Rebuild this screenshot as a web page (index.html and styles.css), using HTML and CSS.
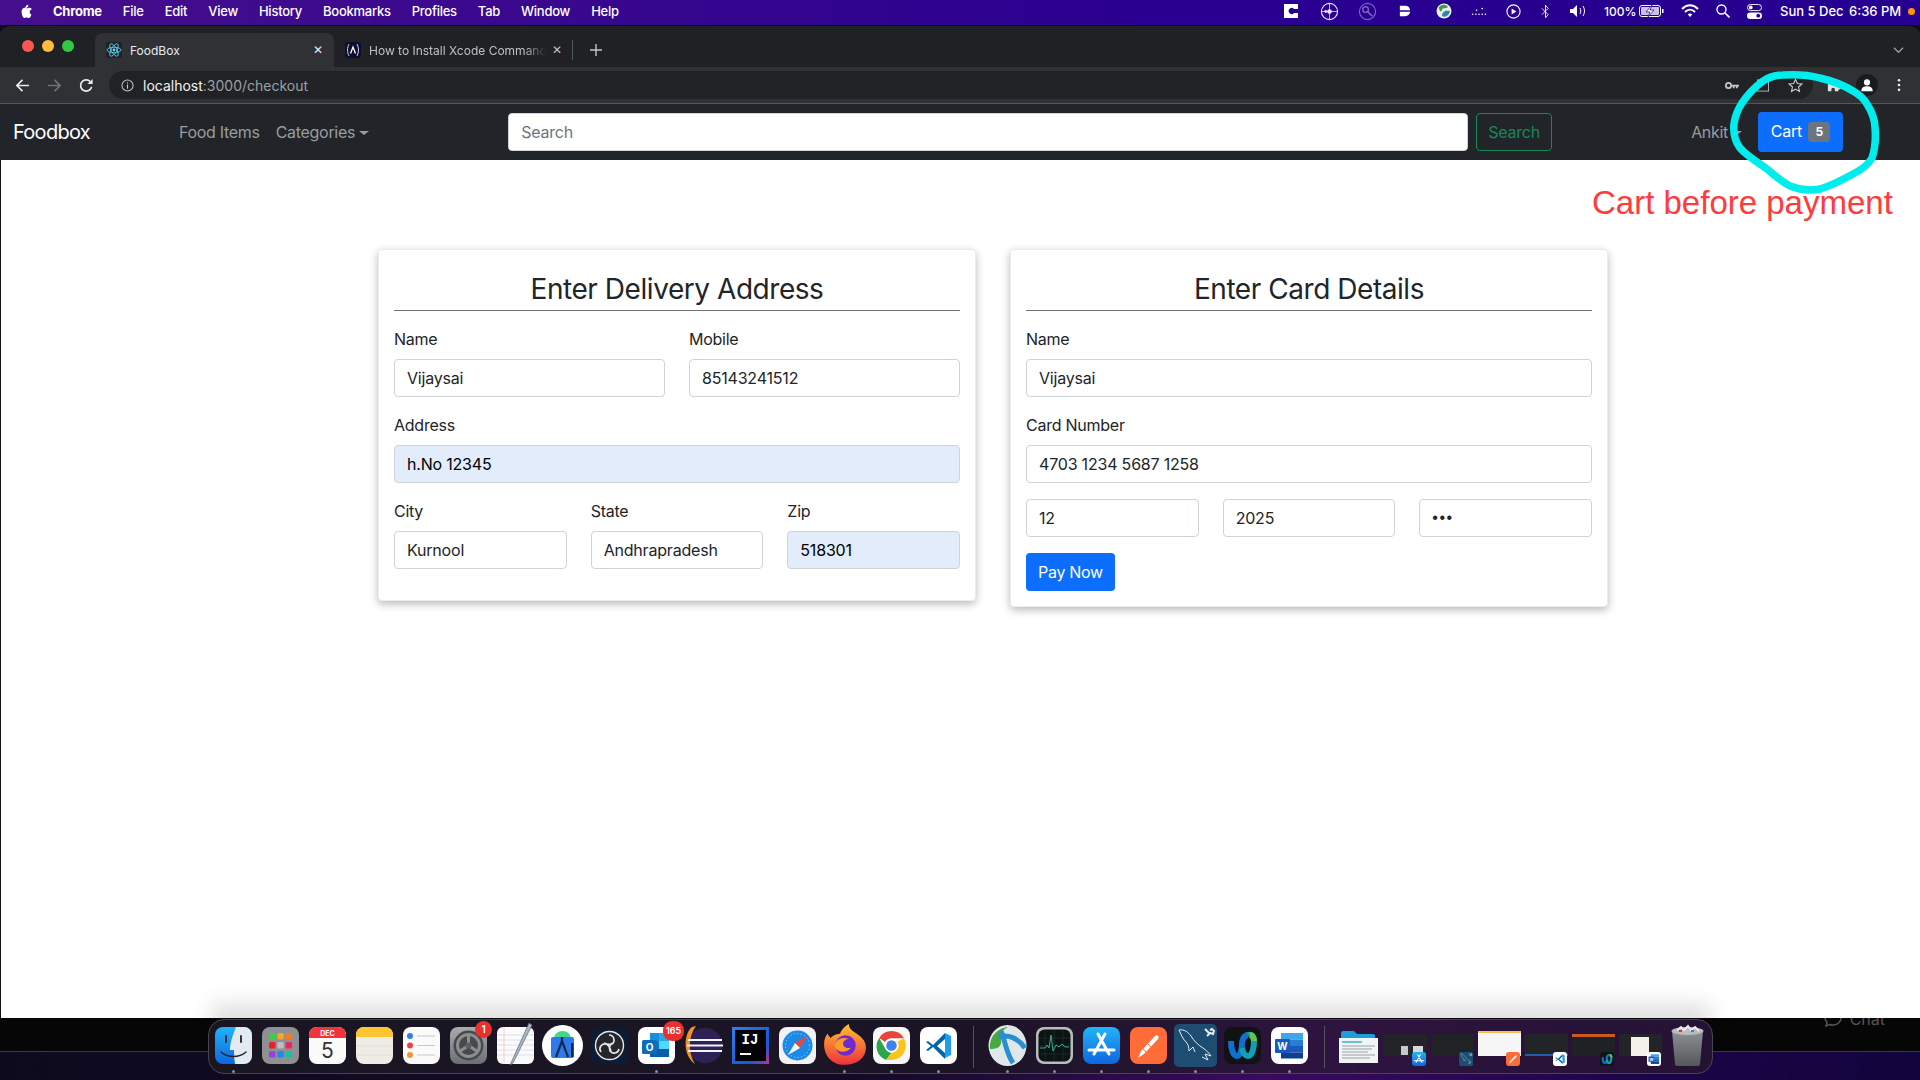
FILE: index.html
```html
<!DOCTYPE html>
<html lang="en">
<head>
<meta charset="UTF-8">
<meta name="viewport" content="width=device-width, initial-scale=1.0">
<title>FoodBox</title>
<link rel="stylesheet" href="styles.css">
</head>
<body>

<!-- shared icons for the dock -->
<svg class="defs" aria-hidden="true">
    <defs>
        <linearGradient id="g-blue" x1="0" y1="0" x2="0" y2="1"><stop offset="0" stop-color="#20b4f8"/><stop offset="1" stop-color="#0f66e0"/></linearGradient>
        <linearGradient id="g-gray" x1="0" y1="0" x2="0" y2="1"><stop offset="0" stop-color="#a9adb0"/><stop offset="1" stop-color="#6b6f72"/></linearGradient>
        <linearGradient id="g-ij" x1="0" y1="0" x2="1" y2="1"><stop offset="0" stop-color="#2f7fe8"/><stop offset=".7" stop-color="#1459d8"/><stop offset="1" stop-color="#c0308a"/></linearGradient>
        <linearGradient id="g-fox" x1="0" y1="0" x2="0" y2="1"><stop offset="0" stop-color="#ffc02e"/><stop offset="1" stop-color="#f0303f"/></linearGradient>
        <linearGradient id="g-trash" x1="0" y1="0" x2="0" y2="1"><stop offset="0" stop-color="#8d9193"/><stop offset="1" stop-color="#55585b"/></linearGradient>

        <symbol id="i-appstore" viewBox="0 0 37 37">
            <rect width="37" height="37" rx="8" fill="url(#g-blue)"/>
            <path d="M22 7 11 27M15 7l11 20M6 23h25" stroke="#fff" stroke-width="3" stroke-linecap="round" fill="none"/>
        </symbol>
        <symbol id="i-postman" viewBox="0 0 37 37">
            <rect width="37" height="37" rx="8" fill="#ff6c37"/>
            <path d="M8 31l3-7L25 9c2-2 5 1 3 3L14 27z" fill="#fff"/>
            <path d="M13 22l4 4M18 17l3 3" stroke="#ff6c37" stroke-width="1"/>
        </symbol>
        <symbol id="i-mysql" viewBox="0 0 43 43">
            <rect width="43" height="43" rx="5" fill="#1d4d70"/>
            <path d="M5 6c5-1 9 2 12 6 3 5 7 9 12 12 4 3 6 5 8 8l-6-2 3 6-6-3M5 6c2 4 3 8 7 12 2 2 3 5 3 9l4-4 2 5" stroke="#e4edf2" stroke-width="1" fill="none"/>
            <path d="M31 5l5 5M33 12l3-3 3 1 1-3-2-2-2 1" stroke="#e4edf2" stroke-width="2" fill="none"/>
        </symbol>
        <symbol id="i-webex" viewBox="0 0 37 37">
            <rect width="37" height="37" rx="8" fill="#111214"/>
            <path d="M7 14c0 8 2 15 6 15s5-8 5-12 2-9 6-9" stroke="#1170cf" stroke-width="6" fill="none"/>
            <path d="M18 21c1 5 3 8 6 8 4 0 6-7 6-15 0-4-3-7-6-6" stroke="#0fa0b8" stroke-width="6" fill="none"/>
            <path d="M26 8c3 0 4 3 4 6" stroke="#5fc94a" stroke-width="6" fill="none"/>
        </symbol>
        <symbol id="i-word" viewBox="0 0 37 37">
            <rect width="37" height="37" rx="8" fill="#fff"/>
            <rect x="10" y="6" width="22" height="6.500" fill="#41a5ee"/>
            <rect x="10" y="12.500" width="22" height="6.500" fill="#2b7cd3"/>
            <rect x="10" y="19" width="22" height="6.500" fill="#185abd"/>
            <rect x="10" y="25.500" width="22" height="6" fill="#103f91"/>
            <rect x="4" y="12" width="15" height="14" rx="1" fill="#185abd"/>
            <text x="11.500" y="23" text-anchor="middle" class="svg-text" font-size="10" font-weight="700" fill="#fff">W</text>
        </symbol>
        <symbol id="i-vscode" viewBox="0 0 37 37">
            <rect width="37" height="37" rx="8" fill="#fff"/>
            <path d="M25 6v25l6-3V9z" fill="#1f9cf0"/>
            <path d="M25 6 13 18 8 14l-2 1 5 4-5 4 2 1 5-4 12 12v-6l-8-7 8-7z" fill="#0065a9"/>
        </symbol>
    </defs>
</svg>

<div class="menubar">
    <svg class="apple" viewBox="0 0 20 20"><path d="M12.200 2.500c.1 1-.3 2-.9 2.700-.6.700-1.600 1.300-2.600 1.200-.1-1 .4-2 .9-2.600.6-.7 1.700-1.300 2.600-1.300zM15.500 8.100c-.1.100-1.700 1-1.700 3 0 2.300 2 3.100 2.100 3.100 0 .1-.3 1.100-1 2.200-.6.900-1.300 1.800-2.300 1.800s-1.300-.6-2.500-.6c-1.100 0-1.500.6-2.500.6s-1.600-.9-2.300-1.900C4.900 15 4.200 12.900 4.200 11c0-3 2-4.700 3.900-4.700 1 0 1.900.7 2.500.7.600 0 1.600-.7 2.700-.7.400 0 2 0 3 1.500z" fill="#fff"/></svg>
    <div class="menu-items">
        <span class="menu-app">Chrome</span>
        <span>File</span>
        <span>Edit</span>
        <span>View</span>
        <span>History</span>
        <span>Bookmarks</span>
        <span>Profiles</span>
        <span>Tab</span>
        <span>Window</span>
        <span>Help</span>
    </div>
    <div class="status">
        <svg class="st st-c" viewBox="0 0 14 14"><rect width="14" height="14" fill="#fff"/><path d="M10 5a3 3 0 1 0 0 4h4V5z" fill="#240088"/></svg>
        <svg class="st st-globe" viewBox="0 0 20 20"><circle cx="10" cy="10" r="8.500" fill="none" stroke="#e8e4f5" stroke-width="1.200"/><path d="M10 1.500v17M1.500 10h17" stroke="#e8e4f5" stroke-width=".8"/><circle cx="10" cy="10" r="2.500" fill="#e8e4f5"/><circle cx="6" cy="10" r="1.500" fill="#e8e4f5"/></svg>
        <svg class="st st-key" viewBox="0 0 20 20"><circle cx="10" cy="10" r="8.500" fill="none" stroke="#7a66c0" stroke-width="1.200"/><circle cx="8" cy="8" r="3" fill="none" stroke="#7a66c0" stroke-width="1.500"/><path d="M10 10l5 5" stroke="#7a66c0" stroke-width="1.800"/></svg>
        <svg class="st st-d" viewBox="0 0 14 14"><path d="M1 1h6a6 6 0 0 1 6 5H1zM1 8h12a6 6 0 0 1-6 5H1z" fill="#fff"/></svg>
        <svg class="st st-earth" viewBox="0 0 16 16"><circle cx="8" cy="8" r="7.500" fill="#e8efe8"/><path d="M3 4c3-3 7-3 9 0-2 2-5 0-6 3S3 8 3 4z" fill="#3f9a50"/><path d="M6 13c0-4 3-6 8-5-1 4-4 7-8 5z" fill="#2b86b8"/></svg>
        <svg class="st st-dots" viewBox="0 0 20 12"><g fill="#fff"><circle cx="2" cy="10" r="1"/><circle cx="6" cy="10" r="1"/><circle cx="10" cy="10" r="1"/><circle cx="14" cy="10" r="1"/><circle cx="18" cy="10" r="1"/><circle cx="7" cy="5" r="1"/><circle cx="14" cy="3" r="1"/></g></svg>
        <svg class="st st-play" viewBox="0 0 16 16"><circle cx="8" cy="8" r="7" fill="none" stroke="#fff" stroke-width="1.200"/><path d="M6 4.800v6.400L11 8z" fill="#fff"/></svg>
        <svg class="st st-bt" viewBox="0 0 10 16"><path d="M1 4.500l7 7L5 15V1l3 3.500-7 7" fill="none" stroke="#e8e4f5" stroke-width="1.100"/></svg>
        <svg class="st st-vol" viewBox="0 0 18 14"><path d="M0 5h3l4-4v12L3 9H0z" fill="#fff"/><path d="M10 4c1 2 1 4 0 6M13 2c2 3 2 7 0 10" stroke="#fff" fill="none"/></svg>
        <span class="st-pct">100%</span>
        <svg class="st st-bat" viewBox="0 0 25 12"><rect x=".5" y=".5" width="21" height="11" rx="2.500" fill="none" stroke="#fff"/><rect x="2" y="2" width="18" height="8" rx="1" fill="#c9c4e6"/><path d="M13 0l-6 7h4l-2 5 6-7h-4z" fill="#fff" stroke="#240088" stroke-width=".7"/><rect x="23" y="4" width="1.500" height="4" fill="#fff"/></svg>
        <svg class="st st-wifi" viewBox="0 0 18 14"><path d="M1 5c5-5 11-5 16 0M4 8c3-3 7-3 10 0" fill="none" stroke="#fff" stroke-width="2"/><path d="M6.800 10.500c1.400-1.200 3-1.200 4.400 0L9 13z" fill="#fff"/></svg>
        <svg class="st st-search" viewBox="0 0 14 14"><circle cx="5.500" cy="5.500" r="4.500" fill="none" stroke="#fff" stroke-width="1.400"/><path d="M9 9l4.500 4.500" stroke="#fff" stroke-width="1.600"/></svg>
        <svg class="st st-ctl" viewBox="0 0 16 16"><rect x=".5" y=".5" width="15" height="6.500" rx="3.200" fill="none" stroke="#fff"/><circle cx="4" cy="3.700" r="2" fill="#fff"/><rect x="0" y="9" width="16" height="7" rx="3.500" fill="#fff"/><circle cx="12" cy="12.500" r="2" fill="#240088"/></svg>
        <span class="st-date">Sun 5 Dec</span>
        <span class="st-time">6:36 PM</span>
        <span class="st-rec"></span>
    </div>
</div>

<div class="window">
    <div class="tabstrip">
        <div class="lights">
            <span class="light red"></span>
            <span class="light yellow"></span>
            <span class="light green"></span>
        </div>
        <div class="tab tab-active">
            <svg class="favicon" viewBox="0 0 16 16"><rect width="16" height="16" rx="2" fill="#20232a"/><g fill="none" stroke="#61dafb" stroke-width=".8"><ellipse cx="8" cy="8" rx="7" ry="2.800"/><ellipse cx="8" cy="8" rx="7" ry="2.800" transform="rotate(60 8 8)"/><ellipse cx="8" cy="8" rx="7" ry="2.800" transform="rotate(120 8 8)"/></g><circle cx="8" cy="8" r="1.400" fill="#61dafb"/></svg>
            <span class="tab-title">FoodBox</span>
            <span class="tab-close">✕</span>
        </div>
        <div class="tab tab-other">
            <svg class="favicon" viewBox="0 0 16 16"><rect width="16" height="16" rx="2" fill="#0b1030"/><path d="M4 2C2 6 2 10 4 14M12 2c2 4 2 8 0 12" fill="none" stroke="#ccd" stroke-width="1"/><path d="M5.500 11.500 8 5l2.500 6.500" fill="none" stroke="#fff" stroke-width="1.300"/></svg>
            <span class="tab-title tab-fade">How to Install Xcode Command</span>
            <span class="tab-close dim">✕</span>
        </div>
        <span class="tab-sep"></span>
        <svg class="new-tab" viewBox="0 0 12 12"><path d="M6 0v12M0 6h12" stroke="#c4c7c9" stroke-width="1.400"/></svg>
        <svg class="tab-menu" viewBox="0 0 12 8"><path d="M1 1.500l5 5 5-5" fill="none" stroke="#9a9da0" stroke-width="1.400"/></svg>
    </div>

    <div class="toolbar">
        <svg class="tool tool-back" viewBox="0 0 16 16"><path d="M15 8H2M8 2 2 8l6 6" fill="none" stroke="#e8eaed" stroke-width="1.800"/></svg>
        <svg class="tool tool-fwd" viewBox="0 0 16 16"><path d="M1 8h13M8 2l6 6-6 6" fill="none" stroke="#6f7275" stroke-width="1.800"/></svg>
        <svg class="tool tool-reload" viewBox="0 0 16 16"><path d="M13.500 9.500A6 6 0 1 1 12 3.800" fill="none" stroke="#e8eaed" stroke-width="1.800"/><path d="M14.500 1v5.500H9z" fill="#e8eaed"/></svg>
        <div class="omnibox">
            <svg class="omni-info" viewBox="0 0 14 14"><circle cx="7" cy="7" r="6" fill="none" stroke="#c4c7c9" stroke-width="1.100"/><path d="M7 6v4.500M7 3.500v1.300" stroke="#c4c7c9" stroke-width="1.200"/></svg>
            <span class="url"><span class="url-host">localhost</span>:3000/checkout</span>
            <svg class="omni-key" viewBox="0 0 16 10"><circle cx="4" cy="5" r="3" fill="none" stroke="#c4c7c9" stroke-width="2"/><path d="M7 4h9v2h-1.500v2h-2V6H11v2H9V6H7z" fill="#c4c7c9"/></svg>
            <svg class="omni-tabicon" viewBox="0 0 14 14"><rect x=".5" y=".5" width="13" height="13" fill="none" stroke="#c4c7c9"/></svg>
            <svg class="omni-star" viewBox="0 0 16 16"><path d="M8 1.500l2 4.400 4.800.5-3.600 3.200 1 4.700L8 11.900l-4.200 2.400 1-4.700L1.200 6.400 6 5.900z" fill="none" stroke="#c4c7c9" stroke-width="1.200"/></svg>
        </div>
        <svg class="tool-ext" viewBox="0 0 16 16"><path d="M1 15V6h4V4a2 2 0 0 1 4 0v2h4v3h1a2 2 0 0 1 0 4h-1v2h-4v-2a2 2 0 0 0-4 0v2z" fill="#dfe1e3"/></svg>
        <div class="avatar"><svg viewBox="0 0 16 16"><circle cx="8" cy="5" r="3.500" fill="#fff"/><path d="M1.500 15c0-4 3-5.500 6.500-5.500s6.500 1.500 6.500 5.500z" fill="#fff"/></svg></div>
        <svg class="tool-dots" viewBox="0 0 4 16"><g fill="#e8eaed"><circle cx="2" cy="2.500" r="1.500"/><circle cx="2" cy="8" r="1.500"/><circle cx="2" cy="13.500" r="1.500"/></g></svg>
    </div>

    <nav class="navbar">
        <a class="brand">Foodbox</a>
        <a class="nav-link">Food Items</a>
        <a class="nav-link caret">Categories</a>
        <form class="search-form">
            <input class="search-input" type="text" placeholder="Search">
            <button class="search-btn" type="button">Search</button>
        </form>
        <a class="nav-link caret user">Ankit</a>
        <button class="cart-btn" type="button">Cart <span class="cart-badge">5</span></button>
    </nav>

    <main class="page">
        <div class="card">
            <h2 class="card-title">Enter Delivery Address</h2>
            <div class="row">
                <div class="field"><label>Name</label><input type="text" value="Vijaysai"></div>
                <div class="field"><label>Mobile</label><input type="text" value="85143241512"></div>
            </div>
            <div class="row">
                <div class="field"><label>Address</label><input class="autofill" type="text" value="h.No 12345"></div>
            </div>
            <div class="row">
                <div class="field"><label>City</label><input type="text" value="Kurnool"></div>
                <div class="field"><label>State</label><input type="text" value="Andhrapradesh"></div>
                <div class="field"><label>Zip</label><input class="autofill" type="text" value="518301"></div>
            </div>
        </div>

        <div class="card">
            <h2 class="card-title">Enter Card Details</h2>
            <div class="row">
                <div class="field"><label>Name</label><input type="text" value="Vijaysai"></div>
            </div>
            <div class="row">
                <div class="field"><label>Card Number</label><input type="text" value="4703 1234 5687 1258"></div>
            </div>
            <div class="row">
                <div class="field"><input type="text" value="12"></div>
                <div class="field"><input type="text" value="2025"></div>
                <div class="field"><input type="password" value="123"></div>
            </div>
            <button class="pay-btn" type="button">Pay Now</button>
        </div>

        <div class="dock-shade"></div>
    </main>
</div>

<!-- hand drawn annotation on top of the screenshot -->
<svg class="scribble" viewBox="0 0 160 130"><path d="M58 9C72 8 84 9 95 12C108 15 120 20 128 25C135 29 139 33 142 38C147 46 150 54 150 62C151 73 150 83 147 92C143 99 136 104 128 108C117 114 106 120 95 123C85 125 75 124 65 120C57 116 49 109 42 103C32 96 22 90 15 82C10 75 8 67 9 58C10 50 13 43 17 37C23 28 30 21 38 15C44 11 51 9 58 9Z" fill="none" stroke="#00eded" stroke-width="7.500"/></svg>
<div class="note">Cart before payment</div>

<div class="desktop">
    <div class="behind-chat">
        <svg viewBox="0 0 18 18"><path d="M9 1c4.500 0 8 3 8 7s-3.500 7-8 7c-1 0-2 0-3-.5L2 16l1-3.500C2 11 1 10 1 8c0-4 3.500-7 8-7z" fill="none" stroke="#555" stroke-width="1.500"/></svg>
        <span>Chat</span>
    </div>
    <div class="dock">
        <div class="dock-item on">
            <svg class="ico" viewBox="0 0 37 37"><rect width="37" height="37" rx="8" fill="url(#g-blue)"/><path d="M29 0a8 8 0 0 1 8 8v21a8 8 0 0 1-8 8H20c-1-6-1-10-1-14h-4c0-8 3-15 6-23z" fill="#e3ebf2"/><path d="M11 9v6M26 9v6" stroke="#222" stroke-width="1.800" stroke-linecap="round"/><path d="M6 25c7 6 18 6 25 0" fill="none" stroke="#222" stroke-width="1.500" stroke-linecap="round"/></svg>
        </div>
        <div class="dock-item">
            <svg class="ico" viewBox="0 0 37 37"><rect width="37" height="37" rx="8" fill="#8f9094"/><g><rect x="7" y="6" width="6.500" height="6.500" rx="1.500" fill="#37d24a"/><rect x="15.300" y="6" width="6.500" height="6.500" rx="1.500" fill="#f5a623"/><rect x="23.600" y="6" width="6.500" height="6.500" rx="1.500" fill="#f57c1f"/><rect x="7" y="15" width="6.500" height="6.500" rx="1.500" fill="#e8202a"/><rect x="15.300" y="15" width="6.500" height="6.500" rx="1.500" fill="#b9c0c4"/><rect x="23.600" y="15" width="6.500" height="6.500" rx="1.500" fill="#f0285a"/><rect x="7" y="24" width="6.500" height="6.500" rx="1.500" fill="#9a3fe0"/><rect x="15.300" y="24" width="6.500" height="6.500" rx="1.500" fill="#1a8cf0"/><rect x="23.600" y="24" width="6.500" height="6.500" rx="1.500" fill="#14c49a"/></g></svg>
        </div>
        <div class="dock-item">
            <svg class="ico" viewBox="0 0 37 37"><rect width="37" height="37" rx="8" fill="#fbfbfb"/><path d="M0 11V8a8 8 0 0 1 8-8h21a8 8 0 0 1 8 8v3z" fill="#f0353a"/><text x="18.500" y="8.500" text-anchor="middle" class="svg-text" font-size="7" font-weight="700" fill="#fff">DEC</text><text x="18.500" y="31" text-anchor="middle" class="svg-text" font-size="21" fill="#333">5</text></svg>
        </div>
        <div class="dock-item">
            <svg class="ico" viewBox="0 0 37 37"><rect width="37" height="37" rx="8" fill="#efece6"/><path d="M0 10V8a8 8 0 0 1 8-8h21a8 8 0 0 1 8 8v2z" fill="#fdc530"/><path d="M0 19h37M0 28h37" stroke="#dcd9d2" stroke-width=".7"/></svg>
        </div>
        <div class="dock-item">
            <svg class="ico" viewBox="0 0 37 37"><rect width="37" height="37" rx="8" fill="#fafafa"/><circle cx="7" cy="9" r="3" fill="#2f7cf0"/><circle cx="7" cy="18.500" r="3" fill="#ee3f48"/><circle cx="7" cy="28" r="3" fill="#f59331"/><path d="M14 9h18M14 18.500h18M14 28h18" stroke="#c8c8c8"/></svg>
        </div>
        <div class="dock-item">
            <svg class="ico" viewBox="0 0 37 37"><rect width="37" height="37" rx="8" fill="url(#g-gray)"/><circle cx="18.500" cy="18.500" r="15" fill="#48494b"/><circle cx="18.500" cy="18.500" r="11" fill="none" stroke="#8c8f91" stroke-width="3"/><path d="M18.500 18.500V8M18.500 18.500l9 6M18.500 18.500l-9 6" stroke="#8c8f91" stroke-width="3"/><circle cx="18.500" cy="18.500" r="3" fill="#5b5e60"/></svg>
            <span class="dock-badge badge-one">1</span>
        </div>
        <div class="dock-item">
            <svg class="ico" viewBox="0 0 37 37"><rect width="37" height="37" rx="6" fill="#fbfbfb"/><path d="M0 8h37M0 13h37M0 18h37M0 23h37M0 28h37" stroke="#c6cfe0" stroke-width=".6"/><path d="M7 0v37" stroke="#f0b5b5" stroke-width=".6"/><path d="M32 -4 14 36l-1 2 3-2L35 -2z" fill="#a9b8c4" stroke="#59636b" stroke-width=".7"/></svg>
        </div>
        <div class="dock-item">
            <svg class="ico ico-over" viewBox="0 0 41 41"><circle cx="20.500" cy="20.500" r="20.500" fill="#fff"/><path d="M12 14c0-5 4-8 8.500-8s8.500 3 8.500 8z" fill="#3ddc84"/><rect x="9" y="12" width="23" height="21" rx="2" fill="#2f79ea"/><path d="M14 32l6-16 6 16M20 12v4" stroke="#0b2d55" stroke-width="2.200" fill="none"/><rect x="29" y="18" width="2.500" height="14" fill="#0b2d55"/></svg>
        </div>
        <div class="dock-item">
            <svg class="ico" viewBox="0 0 37 37"><rect width="37" height="37" rx="8" fill="#0d1c35"/><circle cx="18.500" cy="18.500" r="14" fill="#23272c" stroke="#e8e8e8" stroke-width="1.400"/><path d="M18 8a5 5 0 0 1 3 9c-3 1-6 0-8-1M28 22a5 5 0 0 1-9 2c-1-3 0-6 2-8M10 25a5 5 0 0 1 5-8c3 1 4 4 5 7" fill="none" stroke="#e8e8e8" stroke-width="1.600"/></svg>
        </div>
        <div class="dock-item on">
            <svg class="ico" viewBox="0 0 37 37"><rect width="37" height="37" rx="8" fill="#fff"/><rect x="12" y="6" width="10" height="8" fill="#1490df"/><rect x="21" y="6" width="10" height="8" fill="#28a8ea"/><rect x="12" y="14" width="10" height="8" fill="#0078d4"/><rect x="21" y="14" width="10" height="8" fill="#50d9ff"/><rect x="12" y="22" width="19" height="8" fill="#0a5ea8"/><rect x="4" y="13" width="15" height="14" rx="1.500" fill="#0f6cbd"/><text x="11.500" y="24" text-anchor="middle" class="svg-text" font-size="10" font-weight="700" fill="#fff">O</text></svg>
            <span class="dock-badge badge-mail">165</span>
        </div>
        <div class="dock-item">
            <svg class="ico ico-over" viewBox="0 0 41 41"><circle cx="22" cy="20.500" r="18" fill="#2c2255" stroke="#1c1c22"/><path d="M9 2C1 8-1 30 12 39 5 28 5 12 13 1z" fill="#f0902a"/><path d="M5 15h34M4 20.500h36M5 26h34" stroke="#f2f2fa" stroke-width="2"/></svg>
        </div>
        <div class="dock-item">
            <svg class="ico" viewBox="0 0 37 37"><rect width="37" height="37" fill="url(#g-ij)"/><rect x="3" y="3" width="31" height="31" fill="#050308"/><text x="18" y="17" text-anchor="middle" class="svg-text-mono" font-size="14" font-weight="700" fill="#fff">IJ</text><rect x="8" y="26" width="11" height="2" fill="#fff"/></svg>
        </div>
        <div class="dock-item">
            <svg class="ico" viewBox="0 0 37 37"><rect width="37" height="37" rx="8" fill="#f2f2f2"/><circle cx="18.500" cy="18.500" r="15" fill="#1d8ae8"/><circle cx="18.500" cy="18.500" r="12" fill="none" stroke="#bfe0fb" stroke-dasharray="1 2.500"/><path d="M28 9 16 16l5 5z" fill="#f44336"/><path d="M9 28l7-12 5 5z" fill="#fff"/></svg>
        </div>
        <div class="dock-item on">
            <svg class="ico ico-fox" viewBox="0 0 41 41"><path d="M20 39C8 39 1 30 1 20c0-4 1-7 3-10l3 4c3-3 6-4 9-4 1-4 5-7 8-9 0 3 2 6 6 8 5 3 10 7 10 14 0 9-8 16-20 16z" fill="url(#g-fox)"/><circle cx="21" cy="21" r="9.500" fill="#6b2bd0"/><path d="M11 19c3-5 9-6 13-4-4 0-6 3-5 6 1 2 4 3 7 2-3 4-9 5-13 2-2-1-2-4-2-6z" fill="#ff9a2a"/></svg>
        </div>
        <div class="dock-item on">
            <svg class="ico" viewBox="0 0 37 37"><rect width="37" height="37" rx="8" fill="#f7f7f7"/><path d="M18.500 4A14.500 14.500 0 0 1 31 11.300H18.500a7.200 7.200 0 0 0-6.300 3.700L6.200 10.900A14.500 14.500 0 0 1 18.500 4z" fill="#e8463a"/><path d="M6.200 10.900 12.500 22a7.200 7.200 0 0 0 6 3.700L13 33A14.500 14.500 0 0 1 6.200 10.900z" fill="#2ea44f"/><path d="M31 11.300A14.500 14.500 0 0 1 18.500 33h-5.500l5.500-7.300a7.200 7.200 0 0 0 6-11z" fill="#f8c51c"/><circle cx="18.500" cy="18.500" r="6" fill="#3d82f0" stroke="#fff" stroke-width="1.500"/></svg>
        </div>
        <div class="dock-item on">
            <svg class="ico"><use href="#i-vscode"/></svg>
        </div>

        <span class="dock-sep"></span>

        <div class="dock-item on">
            <svg class="ico ico-over" viewBox="0 0 41 41"><ellipse cx="20.500" cy="20.500" rx="19" ry="20.500" fill="#dfe7ea"/><path d="M3 24C2 11 11 3 21 2c-6 3-8 7-7 12 1 8-3 10-11 10z" fill="#4aa844"/><path d="M12 12c9-3 19 1 26 11M14 6c4 9 5 22 12 32" stroke="#2a8fd0" stroke-width="5" fill="none"/></svg>
        </div>
        <div class="dock-item on">
            <svg class="ico" viewBox="0 0 37 37"><rect width="37" height="37" rx="8" fill="#b9bcbe"/><rect x="2.500" y="2.500" width="32" height="32" rx="6" fill="#0c1412"/><path d="M9 3v31M18 3v31M27 3v31M3 11h31M3 19h31M3 27h31" stroke="#1c3a32" stroke-width=".6"/><path d="M4 21h5l2-3 2 3 2-13 2 16 3-6 3 2 3-3 3 3 4 0" fill="none" stroke="#3cb99c" stroke-width=".9"/></svg>
        </div>
        <div class="dock-item on">
            <svg class="ico"><use href="#i-appstore"/></svg>
        </div>
        <div class="dock-item on">
            <svg class="ico"><use href="#i-postman"/></svg>
        </div>
        <div class="dock-item on">
            <svg class="ico ico-wide"><use href="#i-mysql"/></svg>
        </div>
        <div class="dock-item on">
            <svg class="ico"><use href="#i-webex"/></svg>
        </div>
        <div class="dock-item on">
            <svg class="ico"><use href="#i-word"/></svg>
        </div>

        <span class="dock-sep"></span>

        <div class="dock-item">
            <svg class="ico ico-over" viewBox="0 0 41 41"><path d="M3 8a2 2 0 0 1 2-2h11l3 3h16a2 2 0 0 1 2 2v10H3z" fill="#1a9fdb"/><rect x="1" y="13" width="39" height="25" fill="#f1f4f5"/><path d="M4 17h20" stroke="#3ab0c8" stroke-width="1.500"/><path d="M4 21h33M4 24h30M4 27h26M4 30h33M4 33h28" stroke="#9aa1a5"/></svg>
        </div>
        <div class="dock-item">
            <div class="thumb"><span class="thumb-cards"></span></div>
            <svg class="mini"><use href="#i-appstore"/></svg>
        </div>
        <div class="dock-item">
            <div class="thumb thumb-dim"></div>
            <svg class="mini"><use href="#i-mysql"/></svg>
        </div>
        <div class="dock-item">
            <div class="thumb thumb-light"></div>
            <svg class="mini"><use href="#i-postman"/></svg>
        </div>
        <div class="dock-item">
            <div class="thumb thumb-code"></div>
            <svg class="mini"><use href="#i-vscode"/></svg>
        </div>
        <div class="dock-item">
            <div class="thumb thumb-orange"></div>
            <svg class="mini"><use href="#i-webex"/></svg>
        </div>
        <div class="dock-item">
            <div class="thumb"><span class="thumb-doc"></span></div>
            <svg class="mini"><use href="#i-word"/></svg>
        </div>
        <div class="dock-item">
            <svg class="ico ico-over" viewBox="0 0 41 41"><path d="M5 6h31l-3 33a2 2 0 0 1-2 2H10a2 2 0 0 1-2-2z" fill="url(#g-trash)"/><ellipse cx="20.500" cy="6" rx="16" ry="4" fill="#b9bcbe"/><path d="M10 5l4-3 3 3 4-4 3 4 4-3 4 4" fill="none" stroke="#e9e9e9" stroke-width="2"/><path d="M12 6l3 0" stroke="#d33" stroke-width="2"/><path d="M24 6h3" stroke="#38b" stroke-width="2"/></svg>
        </div>
    </div>
</div>

</body>
</html>
```

FILE: styles.css
```css
* {
    box-sizing: border-box;
}

html, body {
    margin: 0;
    padding: 0;
    width: 1920px;
    height: 1080px;
    overflow: hidden;
}

body {
    font-family: Inter, "Liberation Sans", sans-serif;
    display: flex;
    flex-direction: column;
    position: relative;
    color: #212529;
    background-color: #120a22;
}

.defs {
    position: absolute;
    width: 0;
    height: 0;
}

.svg-text {
    font-family: Inter, sans-serif;
}

.svg-text-mono {
    font-family: "Liberation Mono", monospace;
}

/* mac menu bar */
.menubar {
    height: 25px;
    flex: none;
    display: flex;
    align-items: center;
    padding: 0 0 3px 18px;
    background-image: linear-gradient(to right, #450f8c, #2a0090 60%, #260090);
    color: #fff;
    font-size: 13px;
    font-weight: 500;
}

.apple {
    width: 17px;
    height: 18px;
    margin-right: 18px;
}

.menu-items {
    display: flex;
    gap: 21px;
    letter-spacing: -0.25px;
}

.menu-app {
    font-weight: 700;
}

.status {
    margin-left: auto;
    display: flex;
    align-items: center;
    height: 22px;
}

.st {
    display: block;
}

.st-c { width: 14px; height: 14px; margin-right: 22px; }
.st-globe { width: 19px; height: 19px; margin-right: 19px; }
.st-key { width: 19px; height: 19px; margin-right: 22px; }
.st-d { width: 12px; height: 14px; margin-right: 25px; }
.st-earth { width: 16px; height: 16px; margin-right: 19px; }
.st-dots { width: 16px; height: 10px; margin-right: 19px; }
.st-play { width: 15px; height: 15px; margin-right: 20px; }
.st-bt { width: 9px; height: 15px; margin-right: 20px; }
.st-vol { width: 18px; height: 14px; margin-right: 16px; }
.st-pct { width: 34px; font-size: 12px; margin-right: 1px; }
.st-bat { width: 25px; height: 12px; margin-right: 17px; }
.st-wifi { width: 18px; height: 14px; margin-right: 17px; }
.st-search { width: 14px; height: 14px; margin-right: 17px; }
.st-ctl { width: 15px; height: 15px; margin-right: 18px; }
.st-date { width: 69px; margin-right: 0; white-space: nowrap; }
.st-time { width: 59px; white-space: nowrap; }

.st-rec {
    width: 7px;
    height: 7px;
    margin: 0 5px 0 0;
    border-radius: 50%;
    background-color: #ff9500;
}

/* browser window */
.window {
    height: 993px;
    flex: none;
    display: flex;
    flex-direction: column;
    border-radius: 10px 10px 0 0;
    overflow: hidden;
    background-color: #202124;
    border-top: 1px solid #000;
    position: relative;
    z-index: 1;
}

.tabstrip {
    height: 41px;
    flex: none;
    display: flex;
    align-items: flex-end;
    position: relative;
    padding-left: 95px;
    background-color: #1f2124;
    color: #e8eaed;
    font-size: 12px;
}

.lights {
    position: absolute;
    left: 22px;
    top: 14px;
    display: flex;
    gap: 8px;
}

.light {
    width: 12px;
    height: 12px;
    border-radius: 50%;
}

.red { background-color: #fc5753; }
.yellow { background-color: #fdbc40; }
.green { background-color: #33c748; }

.tab {
    height: 34px;
    display: flex;
    align-items: center;
}

.tab-active {
    width: 239px;
    padding: 0 9px 0 11px;
    border-radius: 8px 8px 0 0;
    background-color: #2f3135;
}

.tab-other {
    width: 238px;
    padding: 0 8px 0 11px;
    color: #bdc1c6;
}

.favicon {
    width: 16px;
    height: 16px;
    flex: none;
    margin-right: 8px;
}

.tab-title {
    flex: 1;
    min-width: 0;
    white-space: nowrap;
    overflow: hidden;
}

.tab-fade {
    -webkit-mask-image: linear-gradient(to right, #000 88%, transparent);
    mask-image: linear-gradient(to right, #000 88%, transparent);
}

.tab-close {
    width: 14px;
    flex: none;
    margin-left: 4px;
    text-align: center;
    font-size: 12px;
    font-weight: 700;
    color: #e8eaed;
    font-family: "DejaVu Sans", sans-serif;
}

.tab-close.dim {
    color: #bdc1c6;
}

.tab-sep {
    width: 1px;
    height: 20px;
    margin: 0 0 7px 0;
    background-color: #55585b;
}

.new-tab {
    width: 12px;
    height: 12px;
    margin: 0 0 11px 17px;
}

.tab-menu {
    width: 11px;
    height: 8px;
    margin: 0 16px 13px auto;
}

.toolbar {
    height: 37px;
    flex: none;
    display: flex;
    align-items: center;
    background-color: #2f3135;
    border-bottom: 1px solid #55575a;
}

.tool {
    width: 15px;
    height: 15px;
    flex: none;
}

.tool-back { margin-left: 15px; }
.tool-fwd { margin-left: 17px; }
.tool-reload { margin-left: 17px; }

.omnibox {
    width: 1704px;
    height: 28px;
    flex: none;
    margin-left: 15px;
    display: flex;
    align-items: center;
    padding-left: 12px;
    border-radius: 14px;
    background-color: #202225;
    color: #9aa0a6;
    font-size: 14px;
}

.omni-info {
    width: 13px;
    height: 13px;
    margin-right: 9px;
}

.url-host {
    color: #f1f3f4;
}

.omni-key {
    width: 14px;
    height: 9px;
    margin-left: auto;
}

.omni-tabicon {
    width: 12px;
    height: 13px;
    margin-left: 18px;
}

.omni-star {
    width: 15px;
    height: 15px;
    margin: 0 10px 0 19px;
}

.tool-ext {
    width: 14px;
    height: 14px;
    margin-left: 14px;
}

.avatar {
    width: 22px;
    height: 22px;
    margin-left: 15px;
    padding: 4px;
    border-radius: 50%;
    background-color: #1a1b1e;
}

.avatar svg {
    display: block;
}

.tool-dots {
    width: 4px;
    height: 14px;
    margin-left: 19px;
}

/* app navbar */
.navbar {
    height: 56px;
    flex: none;
    display: flex;
    align-items: center;
    padding: 0 77px 0 13px;
    background-color: #212529;
}

.brand {
    width: 166px;
    color: #fff;
    font-size: 20px;
    letter-spacing: -0.7px;
}

.nav-link {
    color: #9a9c9e;
    font-size: 16px;
    letter-spacing: -0.3px;
    margin-right: 16px;
}

.caret::after {
    content: "";
    display: inline-block;
    margin-left: 4px;
    vertical-align: 3px;
    border-top: 4px solid currentColor;
    border-left: 5px solid transparent;
    border-right: 5px solid transparent;
}

.search-form {
    display: flex;
    gap: 8px;
    margin-left: 123px;
}

.search-input {
    width: 960px;
    height: 38px;
    padding: 6px 12px;
    border: 1px solid #ced4da;
    border-radius: 4px;
    font-family: inherit;
    font-size: 16px;
    letter-spacing: -0.2px;
    color: #212529;
}

.search-input::placeholder {
    color: #6c757d;
}

.search-btn {
    width: 76px;
    height: 38px;
    padding: 0;
    border: 1px solid #198754;
    border-radius: 4px;
    background: transparent;
    color: #198754;
    font-family: inherit;
    font-size: 16px;
    letter-spacing: -0.2px;
}

.user {
    margin-left: 139px;
    margin-right: 0;
}

.cart-btn {
    width: 85px;
    height: 40px;
    margin-left: auto;
    padding: 0 0 2px 0;
    border: none;
    border-radius: 4px;
    background-color: #0d6efd;
    color: #fff;
    font-family: inherit;
    font-size: 16px;
    letter-spacing: -0.2px;
}

.cart-badge {
    display: inline-block;
    width: 22px;
    margin-left: 2px;
    padding: 3px 0;
    border-radius: 4px;
    background-color: #6c757d;
    font-size: 12px;
    font-weight: 700;
    line-height: 14px;
    vertical-align: 1px;
}

/* checkout */
.page {
    flex: 1;
    display: flex;
    align-items: flex-start;
    gap: 34px;
    padding: 89px 0 0 377px;
    border-left: 1px solid #111;
    background-color: #fff;
    position: relative;
}

.dock-shade {
    position: absolute;
    left: 210px;
    right: 210px;
    bottom: -16px;
    height: 30px;
    background-color: rgba(0, 0, 0, 0.12);
    filter: blur(10px);
}

.card {
    width: 598px;
    padding: 15px;
    border: 1px solid #ececec;
    border-radius: 4px;
    background-color: #fff;
    box-shadow: 0 3px 9px rgba(0, 0, 0, 0.28);
}

.card-title {
    margin: 0 0 16px 0;
    height: 46px;
    padding-top: 2px;
    border-bottom: 1px solid #6f7377;
    font-size: 28px;
    font-weight: 400;
    letter-spacing: -0.45px;
    line-height: 45px;
    text-align: center;
}

.row {
    display: flex;
    gap: 24px;
    margin-bottom: 16px;
}

.field {
    flex: 1;
    min-width: 0;
}

.field label {
    display: block;
    margin-bottom: 8px;
    font-size: 16px;
    letter-spacing: -0.25px;
    line-height: 24px;
}

.field input {
    display: block;
    width: 100%;
    height: 38px;
    padding: 6px 12px;
    border: 1px solid #ced4da;
    border-radius: 4px;
    font-family: inherit;
    font-size: 16px;
    letter-spacing: -0.2px;
    color: #212529;
}

.field input[type="password"] {
    font-family: "Liberation Sans", sans-serif;
    letter-spacing: 1.5px;
}

.field input.autofill {
    background-color: #e2ecfa;
    color: #000;
}

.pay-btn {
    width: 89px;
    height: 38px;
    display: block;
    padding: 0;
    border: none;
    border-radius: 4px;
    background-color: #0d6efd;
    color: #fff;
    font-family: inherit;
    font-size: 16px;
    letter-spacing: -0.3px;
}

/* annotation */
.scribble {
    position: absolute;
    left: 1725px;
    top: 66px;
    width: 160px;
    height: 130px;
    z-index: 2;
}

.note {
    position: absolute;
    left: 1592px;
    top: 184px;
    z-index: 2;
    color: #ff3b3b;
    font-family: "Liberation Sans", Arial, sans-serif;
    font-size: 33px;
    line-height: 38px;
    white-space: nowrap;
}

/* desktop and dock */
.desktop {
    flex: 1;
    position: relative;
    overflow: hidden;
    display: flex;
    justify-content: center;
    padding-top: 1px;
    background-image:
        linear-gradient(#060606 33px, #3a3a3c 33px, #3a3a3c 34px, transparent 34px),
        linear-gradient(100deg, #0d0a1e 0%, #140a26 45%, #3a0a5c 66%, #1c0548 85%, #12043c 100%);
}

.behind-chat {
    position: absolute;
    right: 35px;
    top: -9px;
    display: flex;
    align-items: center;
    gap: 8px;
    color: #555;
    font-size: 16px;
}

.behind-chat svg {
    width: 18px;
    height: 18px;
}

.dock {
    width: 1505px;
    height: 55px;
    display: flex;
    padding: 0 1.500px;
    border: 1px solid #4a4450;
    border-radius: 16px;
    background-image: linear-gradient(to right, #191622, #1b1425 50%, #2e1440 75%, #241233);
    position: relative;
    z-index: 1;
}

.dock-item {
    width: 47px;
    height: 53px;
    flex: none;
    display: flex;
    justify-content: center;
    padding-top: 7px;
    position: relative;
}

.ico {
    width: 37px;
    height: 37px;
    display: block;
    overflow: visible;
}

.ico-over {
    width: 41px;
    height: 41px;
    margin-top: -2px;
}

.ico-fox {
    width: 44px;
    height: 44px;
    margin-top: -4px;
}

.ico-wide {
    width: 43px;
    height: 43px;
    margin-top: -3px;
}

.dock-item.on::after {
    content: "";
    position: absolute;
    left: 22px;
    top: 50px;
    width: 3px;
    height: 3px;
    border-radius: 50%;
    background-color: #8a8a90;
}

.dock-sep {
    width: 1px;
    height: 42px;
    flex: none;
    margin: 6px 10.500px 0;
    background-color: #55505c;
}

.dock-badge {
    position: absolute;
    top: 1px;
    height: 17px;
    border-radius: 9px;
    background-color: #e8302e;
    color: #fff;
    font-size: 10px;
    font-weight: 600;
    line-height: 17px;
    text-align: center;
}

.badge-one {
    left: 30px;
    width: 17px;
}

.badge-mail {
    left: 30px;
    width: 21px;
    height: 20px;
    line-height: 20px;
    font-size: 9px;
}

.thumb {
    width: 43px;
    height: 22px;
    margin-top: 7px;
    background-color: #232427;
    position: relative;
}

.thumb-cards {
    position: absolute;
    left: 17px;
    top: 12px;
    width: 22px;
    height: 9px;
    background-image: linear-gradient(to right, #c8c8c8 30%, #25262a 30%, #25262a 55%, #d8d8d8 55%);
}

.thumb-dim {
    background-color: #212224;
}

.thumb-light {
    height: 25px;
    margin-top: 4px;
    background-color: #f6f6f6;
    border-top: 2px solid #f2c14e;
}

.thumb-code {
    background-image: linear-gradient(#232427 90%, #1f5fa8 90%);
}

.thumb-orange {
    background-image: linear-gradient(#cc5a1e 12%, #202124 12%);
}

.thumb-doc {
    position: absolute;
    left: 12px;
    top: 3px;
    width: 18px;
    height: 19px;
    background-color: #f3f1e8;
}

.mini {
    position: absolute;
    right: 3px;
    top: 32px;
    width: 14px;
    height: 14px;
}
```
